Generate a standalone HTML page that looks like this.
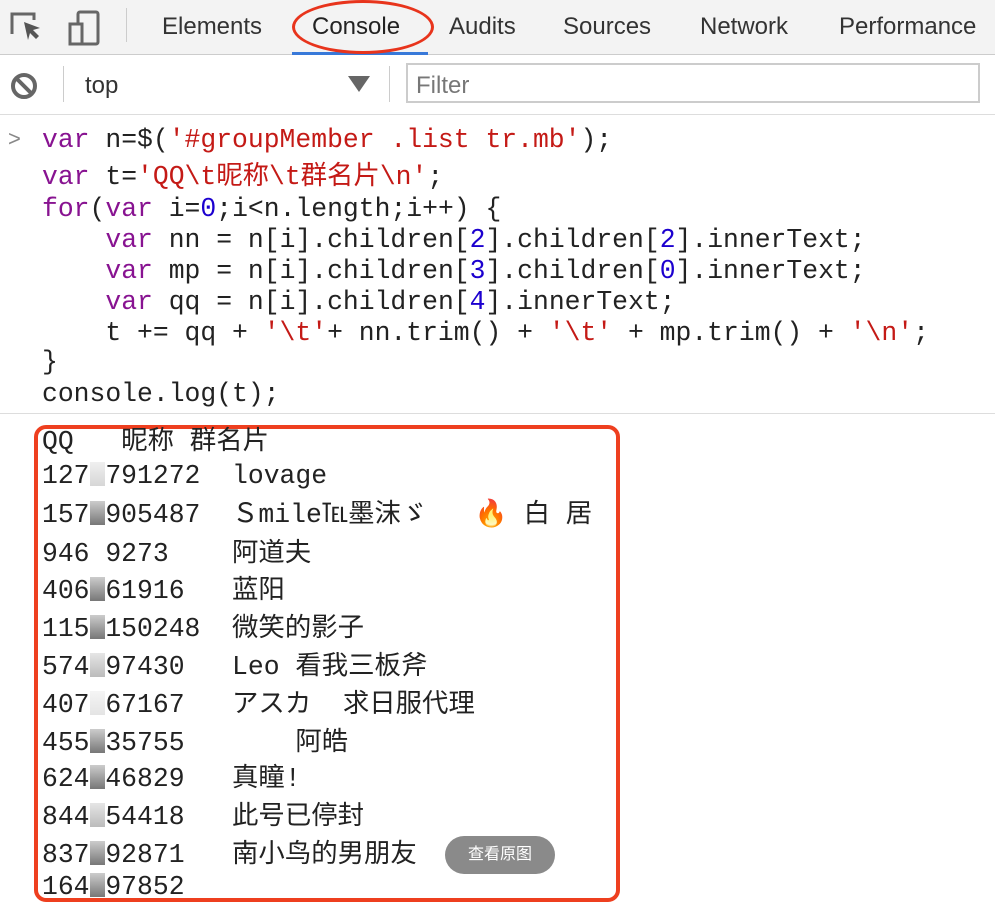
<!DOCTYPE html><html><head><meta charset="utf-8"><style>
body{margin:0;width:995px;height:908px;background:#fff;position:relative;overflow:hidden;font-family:"Liberation Sans","Noto Sans CJK SC",sans-serif}
.a{position:absolute;white-space:pre}
.m{font-family:"Liberation Mono","Noto Sans CJK SC",monospace;font-size:26.4px;line-height:30px;color:#222}
.k{color:#881391}.s{color:#c41a16}.n{color:#1c00cf}
.b{display:inline-block;width:0.6em;height:0.9em;vertical-align:-0.1em;background:linear-gradient(#ccc,#777)}
.tab{position:absolute;top:13px;font-size:24px;color:#333}
</style></head><body>
<div class="a" style="left:0;top:0;width:995px;height:54px;background:#f3f3f3;border-bottom:1px solid #ccc"></div>
<svg class="a" style="left:8px;top:8px" width="100" height="40"><path d="M4 26V6h22v6" fill="none" stroke="#666" stroke-width="3"/><path d="M16 14l16 6-7 2 6 6-3 3-6-6-2 7z" fill="#555"/><rect x="70" y="4" width="20" height="32" rx="2" fill="none" stroke="#666" stroke-width="3"/><rect x="62" y="16" width="12" height="20" fill="#f3f3f3" stroke="#666" stroke-width="3"/></svg>
<div class="a" style="left:126px;top:8px;width:1px;height:34px;background:#ccc"></div>
<div class="tab" style="left:162px">Elements</div>
<div class="tab" style="left:312px;color:#222">Console</div>
<div class="a" style="left:292px;top:52px;width:136px;height:3px;background:#3879d9"></div>
<div class="a" style="left:292px;top:0;width:142px;height:54px;border:3px solid #e8341c;border-radius:50%;box-sizing:border-box"></div>
<div class="tab" style="left:449px">Audits</div>
<div class="tab" style="left:563px">Sources</div>
<div class="tab" style="left:700px">Network</div>
<div class="tab" style="left:839px">Performance</div>
<div class="a" style="left:0;top:55px;width:995px;height:59px;background:#fff;border-bottom:1px solid #ddd"></div>
<svg class="a" style="left:9px;top:71px" width="30" height="30"><circle cx="15" cy="15" r="11" fill="none" stroke="#666" stroke-width="4"/><path d="M7 7l16 16" stroke="#666" stroke-width="4"/></svg>
<div class="a" style="left:63px;top:66px;width:1px;height:36px;background:#ccc"></div>
<div class="a" style="left:85px;top:72px;font-size:24px;color:#333">top</div>
<svg class="a" style="left:348px;top:76px" width="22" height="16"><path d="M0 0h22L11 16z" fill="#666"/></svg>
<div class="a" style="left:389px;top:66px;width:1px;height:36px;background:#ccc"></div>
<div class="a" style="left:406px;top:63px;width:574px;height:40px;border:2px solid #ccc;box-sizing:border-box"></div>
<div class="a" style="left:416px;top:72px;font-size:24px;color:#777">Filter</div>
<div class="a" style="left:8px;top:126px;font-size:22px;color:#888">&gt;</div>
<div class="a m" style="left:42px;top:125px"><span class="k">var</span> n=$(<span class="s">'#groupMember .list tr.mb'</span>);</div>
<div class="a m" style="left:42px;top:162px"><span class="k">var</span> t=<span class="s">'QQ\t昵称\t群名片\n'</span>;</div>
<div class="a m" style="left:42px;top:194px"><span class="k">for</span>(<span class="k">var</span> i=<span class="n">0</span>;i&lt;n.length;i++) {</div>
<div class="a m" style="left:42px;top:225px">    <span class="k">var</span> nn = n[i].children[<span class="n">2</span>].children[<span class="n">2</span>].innerText;</div>
<div class="a m" style="left:42px;top:256px">    <span class="k">var</span> mp = n[i].children[<span class="n">3</span>].children[<span class="n">0</span>].innerText;</div>
<div class="a m" style="left:42px;top:287px">    <span class="k">var</span> qq = n[i].children[<span class="n">4</span>].innerText;</div>
<div class="a m" style="left:42px;top:318px">    t += qq + <span class="s">'\t'</span>+ nn.trim() + <span class="s">'\t'</span> + mp.trim() + <span class="s">'\n'</span>;</div>
<div class="a m" style="left:42px;top:347px">}</div>
<div class="a m" style="left:42px;top:379px">console.log(t);</div>
<div class="a" style="left:0;top:413px;width:995px;height:1px;background:#ddd"></div>
<div class="a" style="left:34px;top:425px;width:586px;height:477px;border:4px solid #ee3f1f;border-radius:12px;box-sizing:border-box"></div>
<div class="a m" style="left:42px;top:427px">QQ   昵称 群名片</div>
<div class="a m" style="left:42px;top:461px">127<span class="b" style="opacity:.3"></span>791272  lovage</div>
<div class="a m" style="left:42px;top:500px">157<span class="b"></span>905487  Ｓmile℡墨沫ゞ   <span style="color:#f5a623">🔥</span> 白 居</div>
<div class="a m" style="left:42px;top:539px">946 9273    阿道夫</div>
<div class="a m" style="left:42px;top:576px">406<span class="b"></span>61916   蓝阳</div>
<div class="a m" style="left:42px;top:614px">115<span class="b"></span>150248  微笑的影子</div>
<div class="a m" style="left:42px;top:652px">574<span class="b" style="opacity:.5"></span>97430   Leo 看我三板斧</div>
<div class="a m" style="left:42px;top:690px">407<span class="b" style="opacity:.2"></span>67167   アスカ  求日服代理</div>
<div class="a m" style="left:42px;top:728px">455<span class="b"></span>35755       阿皓</div>
<div class="a m" style="left:42px;top:764px">624<span class="b"></span>46829   真瞳!</div>
<div class="a m" style="left:42px;top:802px">844<span class="b" style="opacity:.5"></span>54418   此号已停封</div>
<div class="a m" style="left:42px;top:840px">837<span class="b"></span>92871   南小鸟的男朋友</div>
<div class="a m" style="left:42px;top:872px">164<span class="b"></span>97852</div>
<div class="a" style="left:445px;top:836px;width:110px;height:38px;border-radius:19px;background:#8a8a8a;color:#fff;font-size:16px;line-height:38px;text-align:center">查看原图</div>
</body></html>
